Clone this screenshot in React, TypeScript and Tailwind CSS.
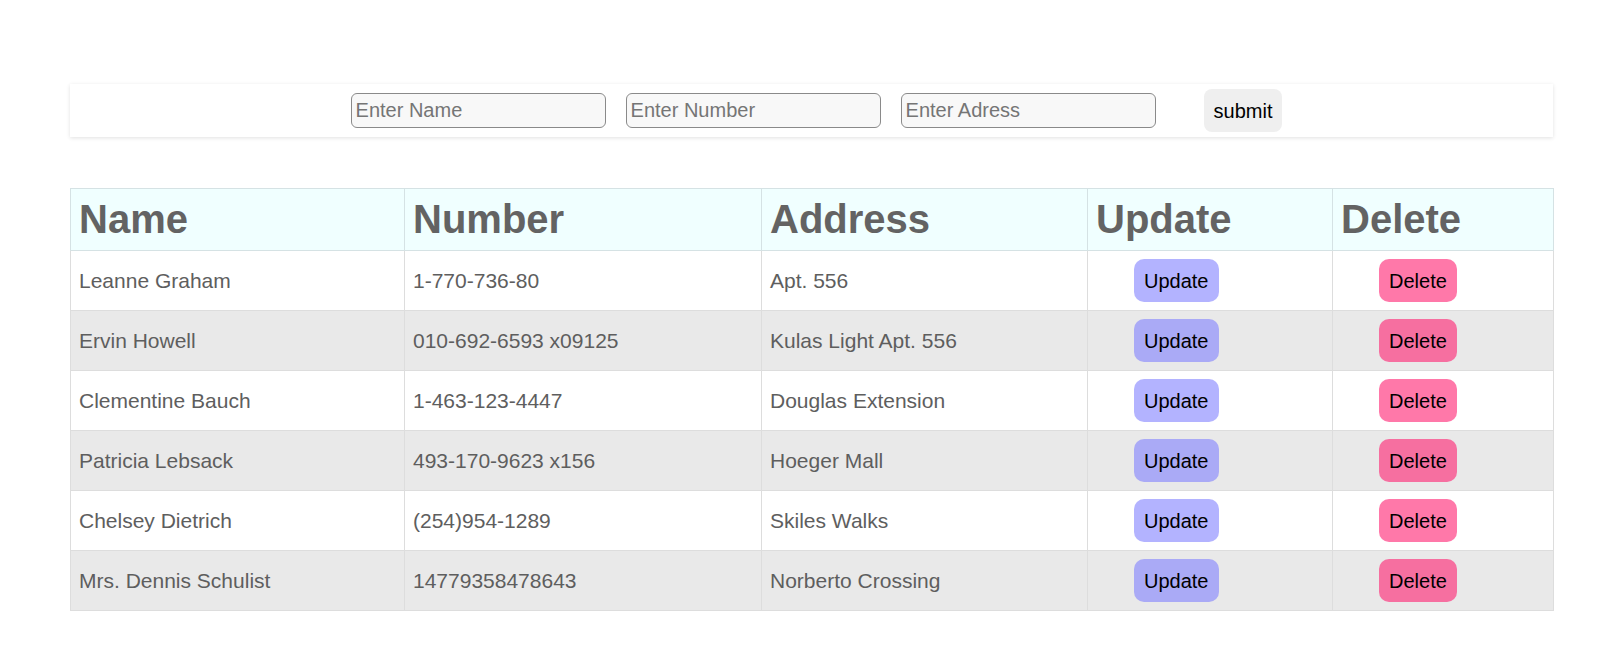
import { useState } from "react";

type User = { name: string; number: string; address: string };

const USERS: User[] = [
  { name: "Leanne Graham", number: "1-770-736-80", address: "Apt. 556" },
  { name: "Ervin Howell", number: "010-692-6593 x09125", address: "Kulas Light Apt. 556" },
  { name: "Clementine Bauch", number: "1-463-123-4447", address: "Douglas Extension" },
  { name: "Patricia Lebsack", number: "493-170-9623 x156", address: "Hoeger Mall" },
  { name: "Chelsey Dietrich", number: "(254)954-1289", address: "Skiles Walks" },
  { name: "Mrs. Dennis Schulist", number: "14779358478643", address: "Norberto Crossing" },
];

/* ---------------- FORM ---------------- */
function AddForm() {
  const [name, setName] = useState("");
  const [number, setNumber] = useState("");
  const [address, setAddress] = useState("");

  const inputCls =
    "w-[255px] h-[35px] pl-1 text-[20px] bg-[#f8f8f8] border border-[#8a8a8a] rounded-[6px] text-black placeholder:text-[#757575] outline-none";

  return (
    <div className="flex items-center justify-center h-[53px] pl-[10px] bg-white shadow-[0_1px_4px_rgba(0,0,0,0.12)]">
      <div className="flex items-center gap-[20px]">
        <input
          className={inputCls}
          placeholder="Enter Name"
          value={name}
          onChange={(e) => setName(e.target.value)}
        />
        <input
          className={inputCls}
          placeholder="Enter Number"
          value={number}
          onChange={(e) => setNumber(e.target.value)}
        />
        <input
          className={inputCls}
          placeholder="Enter Adress"
          value={address}
          onChange={(e) => setAddress(e.target.value)}
        />
      </div>
      <button className="ml-[48px] h-[43px] px-[10px] text-[20px] text-black bg-[#efefef] rounded-[8px]">
        submit
      </button>
    </div>
  );
}

/* ---------------- APP ---------------- */
export default function App() {
  const th =
    "border border-[#d5e2e4] px-2 py-2 text-left text-[40px] font-bold leading-[45px] text-[#636363]";
  const td = "border border-[#dddddd] px-2 py-2 text-[21px] text-[#5e5e5e]";

  return (
    <div className="min-h-screen bg-white pt-[84px] pb-[53px] font-['Liberation_Sans',Arial,sans-serif]">
      <div className="ml-[70px] w-[1483px]">
        <AddForm />

        <table className="mt-[51px] w-full table-fixed border-collapse">
          <colgroup>
            <col className="w-[334px]" />
            <col className="w-[357px]" />
            <col className="w-[326px]" />
            <col className="w-[245px]" />
            <col className="w-[221px]" />
          </colgroup>
          <thead>
            <tr className="bg-[#f0ffff]">
              <th className={th}>Name</th>
              <th className={th}>Number</th>
              <th className={th}>Address</th>
              <th className={th}>Update</th>
              <th className={th}>Delete</th>
            </tr>
          </thead>
          <tbody>
            {USERS.map((u, i) => (
              <tr key={i} className={i % 2 === 1 ? "bg-[#e9e9e9]" : "bg-white"}>
                <td className={td}>{u.name}</td>
                <td className={td}>{u.number}</td>
                <td className={td}>{u.address}</td>
                <td className={td}>
                  <button className="ml-[38px] h-[43px] px-[10px] text-[20px] text-black bg-[rgba(126,126,255,0.59)] rounded-[10px]">
                    Update
                  </button>
                </td>
                <td className={td}>
                  <button className="ml-[38px] h-[43px] px-[10px] text-[20px] text-black bg-[rgba(255,25,109,0.59)] rounded-[10px]">
                    Delete
                  </button>
                </td>
              </tr>
            ))}
          </tbody>
        </table>
      </div>
    </div>
  );
}
